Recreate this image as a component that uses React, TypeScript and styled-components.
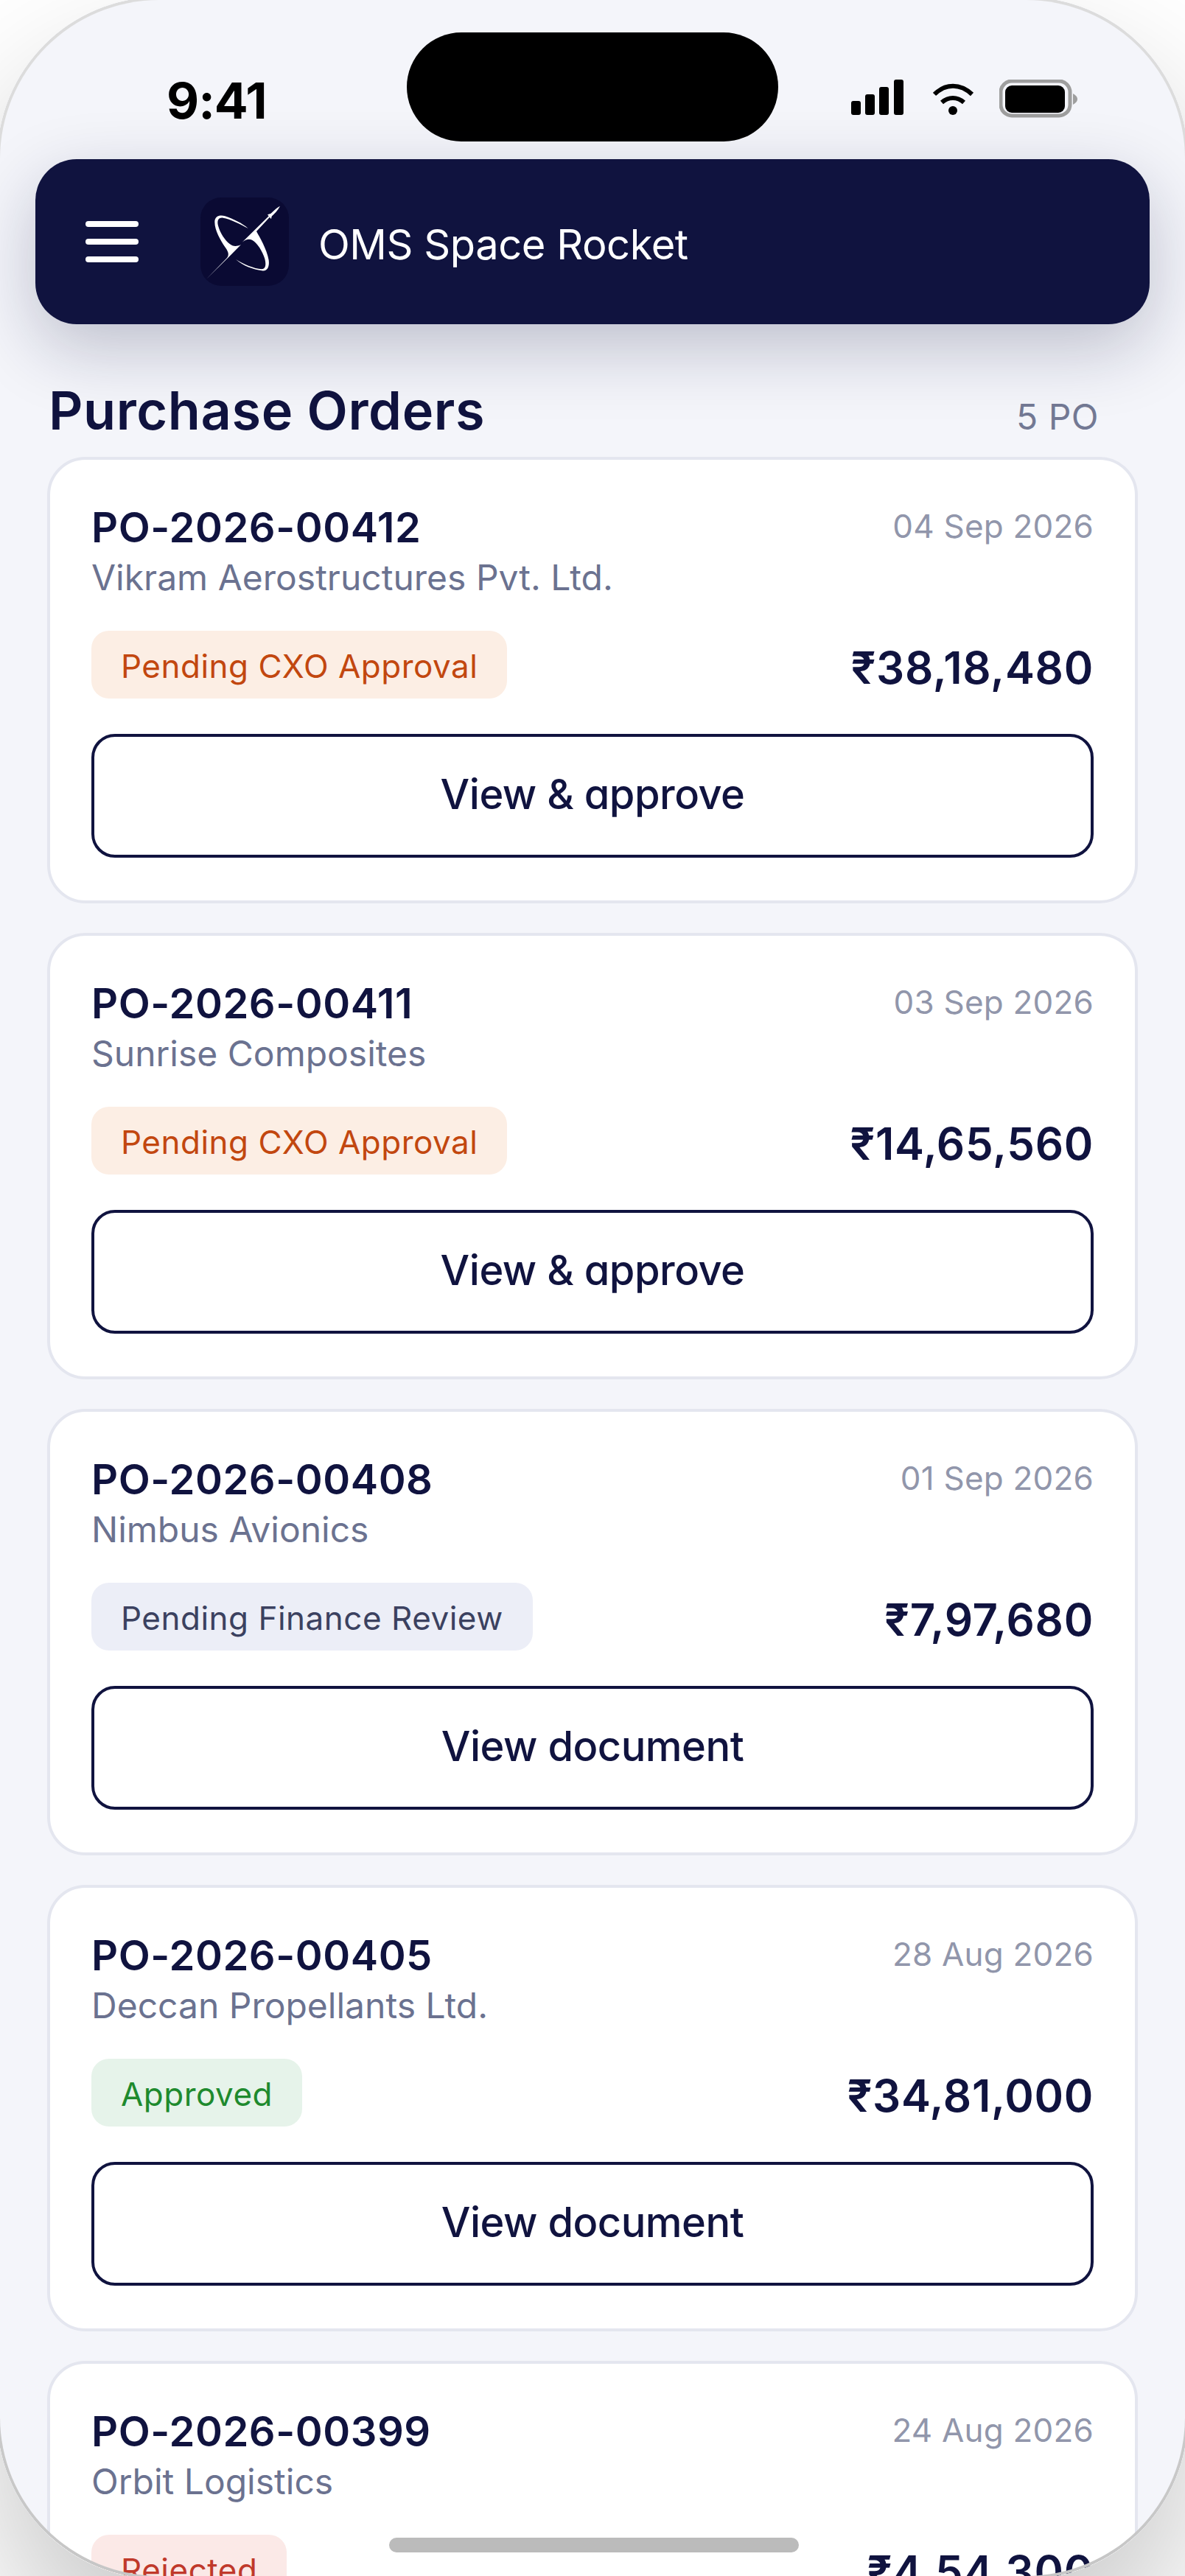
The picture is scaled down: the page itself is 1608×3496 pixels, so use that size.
import React, { FC } from 'react';
import styled, { createGlobalStyle } from 'styled-components';

type Tone = 'pending' | 'review' | 'approved' | 'rejected';

interface IOrder {
  id: string;
  vendor: string;
  date: string;
  status: string;
  tone: Tone;
  amount: string;
  action: string;
}

const orders: IOrder[] = [
  { id: 'PO-2026-00412', vendor: 'Vikram Aerostructures Pvt. Ltd.', date: '04 Sep 2026', status: 'Pending CXO Approval', tone: 'pending', amount: '₹38,18,480', action: 'View & approve' },
  { id: 'PO-2026-00411', vendor: 'Sunrise Composites', date: '03 Sep 2026', status: 'Pending CXO Approval', tone: 'pending', amount: '₹14,65,560', action: 'View & approve' },
  { id: 'PO-2026-00408', vendor: 'Nimbus Avionics', date: '01 Sep 2026', status: 'Pending Finance Review', tone: 'review', amount: '₹7,97,680', action: 'View document' },
  { id: 'PO-2026-00405', vendor: 'Deccan Propellants Ltd.', date: '28 Aug 2026', status: 'Approved', tone: 'approved', amount: '₹34,81,000', action: 'View document' },
  { id: 'PO-2026-00399', vendor: 'Orbit Logistics', date: '24 Aug 2026', status: 'Rejected', tone: 'rejected', amount: '₹4,54,300', action: 'View document' },
];

const toneColors: Record<Tone, { bg: string; fg: string }> = {
  pending: { bg: '#fceee4', fg: '#c2470f' },
  review: { bg: '#eceef7', fg: '#3b4160' },
  approved: { bg: '#e6f3ea', fg: '#1e8a2e' },
  rejected: { bg: '#fbe9e7', fg: '#c0392b' },
};

const App: FC = () => (
  <>
    <GlobalStyle />
    <Phone>
      <StatusBar>
        <Time>9:41</Time>
        <Island />
        <StatusIcons>
          <svg width="71" height="52" viewBox="1156 108 71 52" fill="#000">
            <rect x="1156" y="137" width="13" height="19" rx="3" />
            <rect x="1175" y="128" width="13" height="28" rx="3" />
            <rect x="1194" y="118" width="13" height="38" rx="3" />
            <rect x="1214" y="108" width="13" height="48" rx="3" />
          </svg>
          <WifiIcon width="56" height="52" viewBox="1267 108 56 52" fill="none" stroke="#000" strokeWidth="6">
            <path d="M1269 128 C1284 113 1304 113 1320 128" />
            <path d="M1279 139 C1288 131 1300 131 1309 139" />
            <circle cx="1294" cy="150" r="6" fill="#000" stroke="none" />
          </WifiIcon>
          <svg width="106" height="52" viewBox="1356 108 106 52">
            <rect x="1358" y="110" width="94" height="47" rx="15" fill="none" stroke="#9e9e9e" strokeWidth="5" />
            <rect x="1364" y="116" width="81" height="37" rx="9" fill="#000" />
            <path d="M1456 127 C1460 129 1462 132 1462 134.500 C1462 137 1460 140 1456 142 Z" fill="#9e9e9e" />
          </svg>
        </StatusIcons>
      </StatusBar>

      <Header>
        <Burger>
          <span />
          <span />
          <span />
        </Burger>
        <Logo>
          <svg width="120" height="120" viewBox="30 30 360 360" fill="#fff">
            <path d="M54 362 L138 276 C150 262 140 246 130 232 C112 205 88 165 88 130 C88 105 110 100 130 106 C165 118 200 135 224 156 C195 140 150 117 122 113 C102 111 97 125 102 145 C110 175 130 205 150 220 C160 228 175 232 195 222 L150 268 Z" />
            <path d="M316 106 L258 168 C270 190 300 240 308 285 C312 315 300 332 280 328 C245 322 205 310 174 282 C205 302 250 320 278 322 C296 322 298 305 292 280 C283 250 262 215 240 203 C230 198 215 198 200 212 L312 102 Z" />
            <path d="M354 65 C340 72 322 88 310 104 L316 110 C330 98 345 82 354 65 Z" />
            <path d="M303 100 L322 94 L318 118 Z" />
          </svg>
        </Logo>
        <Title>OMS Space Rocket</Title>
      </Header>

      <HeadingRow>
        <Heading>Purchase Orders</Heading>
        <Count>5 PO</Count>
      </HeadingRow>

      <List>
        {orders.map((order) => (
          <Card key={order.id}>
            <TopRow>
              <div>
                <OrderId>{order.id}</OrderId>
                <Vendor>{order.vendor}</Vendor>
              </div>
              <DateText>{order.date}</DateText>
            </TopRow>
            <MiddleRow>
              <Badge $tone={order.tone}>{order.status}</Badge>
              <Amount>{order.amount}</Amount>
            </MiddleRow>
            <ActionButton>{order.action}</ActionButton>
          </Card>
        ))}
      </List>

      <HomeIndicator />
    </Phone>
  </>
);

export default App;

const GlobalStyle = createGlobalStyle`
  html, body {
    margin: 0;
    padding: 0;
    background: #fff;
    overflow: hidden;
  }

  * {
    box-sizing: border-box;
  }
`;

// 4px wider than the window on each side, so the frame line only shows in the corners
const Phone = styled.div`
  position: relative;
  width: 1616px;
  height: 3504px;
  margin: -4px;
  padding: 4px;
  overflow: hidden;
  background: #f4f5fa;
  border-radius: 220px;
  box-shadow: 0 96px 192px rgba(0, 0, 0, 0.22);
  font-family: Inter, 'Liberation Sans', sans-serif;

  &::after {
    content: '';
    position: absolute;
    inset: 0;
    padding: 4px;
    border-radius: 220px;
    background: linear-gradient(#dcdcdc, #dcdcdc 60%, #c6c6c6);
    mask: linear-gradient(#000 0 0) content-box exclude, linear-gradient(#000 0 0);
    pointer-events: none;
  }
`;

const StatusBar = styled.div`
  display: flex;
  align-items: flex-start;
  justify-content: space-between;
  height: 216px;
  padding: 108px 146px 0 226px;
`;

const Time = styled.div`
  font-size: 68px;
  line-height: 56px;
  font-weight: 700;
  letter-spacing: -1px;
  color: #000;
`;

const Island = styled.div`
  position: absolute;
  top: 48px;
  left: 556px;
  width: 504px;
  height: 148px;
  border-radius: 74px;
  background: #000;
`;

const StatusIcons = styled.div`
  display: flex;
  gap: 34px;

  svg {
    display: block;
  }
`;

const WifiIcon = styled.svg`
  margin-left: 6px;
`;

const Header = styled.header`
  position: relative;
  display: flex;
  align-items: center;
  height: 224px;
  margin: 0 48px;
  padding-left: 68px;
  border-radius: 56px;
  background: #10133f;
  box-shadow: 0 32px 96px rgba(16, 19, 63, 0.24);
`;

const Burger = styled.div`
  display: flex;
  flex-direction: column;
  gap: 16px;
  width: 72px;
  margin-right: 84px;

  span {
    display: block;
    height: 8px;
    border-radius: 4px;
    background: #fff;
  }
`;

const Logo = styled.div`
  width: 120px;
  height: 120px;
  margin-right: 40px;
  border-radius: 28px;
  background: #0a0a33;

  svg {
    display: block;
  }
`;

const Title = styled.div`
  padding-top: 8px;
  font-size: 56px;
  line-height: 72px;
  letter-spacing: -0.45px;
  color: #fff;
`;

const HeadingRow = styled.div`
  display: flex;
  align-items: baseline;
  justify-content: space-between;
  padding: 73px 117px 0 66px;
  margin-bottom: 19px;
`;

const Heading = styled.h1`
  margin: 0;
  font-size: 72px;
  line-height: 88px;
  font-weight: 600;
  letter-spacing: 0.6px;
  color: #10133f;
`;

const Count = styled.div`
  font-size: 48px;
  letter-spacing: 0.5px;
  color: #737994;
`;

const List = styled.div`
  display: flex;
  flex-direction: column;
  gap: 40px;
  margin: 0 64px;
`;

const Card = styled.section`
  height: 606px;
  padding: 56px 56px 56px;
  border: 4px solid #e4e6ef;
  border-radius: 52px;
  background: #fff;
`;

const TopRow = styled.div`
  display: flex;
  align-items: flex-start;
  justify-content: space-between;
`;

const OrderId = styled.div`
  font-size: 56px;
  line-height: 72px;
  font-weight: 600;
  letter-spacing: 0.55px;
  color: #10133f;
`;

const Vendor = styled.div`
  margin-top: 2px;
  font-size: 48px;
  line-height: 60px;
  color: #6b7290;
`;

const DateText = styled.div`
  margin-top: 4px;
  font-size: 44px;
  line-height: 60px;
  letter-spacing: 0.2px;
  color: #9196ab;
`;

const MiddleRow = styled.div`
  display: flex;
  align-items: center;
  justify-content: space-between;
  margin-top: 42px;
`;

const Badge = styled.span<{ $tone: Tone }>`
  display: inline-flex;
  align-items: center;
  height: 92px;
  padding: 4px 40px 0;
  border-radius: 24px;
  font-size: 44px;
  letter-spacing: 0.5px;
  background: ${({ $tone }) => toneColors[$tone].bg};
  color: ${({ $tone }) => toneColors[$tone].fg};
`;

const Amount = styled.div`
  padding-top: 8px;
  font-size: 60px;
  font-weight: 600;
  letter-spacing: 0.7px;
  color: #10133f;
`;

const ActionButton = styled.button`
  display: block;
  width: 100%;
  height: 168px;
  margin-top: 48px;
  padding: 0 0 4px;
  border: 4px solid #10133f;
  border-radius: 32px;
  background: #fff;
  font-family: Inter, sans-serif;
  font-feature-settings: 'cv11';
  font-size: 56px;
  font-weight: 500;
  letter-spacing: -0.5px;
  color: #10133f;
`;

const HomeIndicator = styled.div`
  position: absolute;
  left: 532px;
  bottom: 36px;
  width: 556px;
  height: 20px;
  border-radius: 10px;
  background: #bbb;
`;
